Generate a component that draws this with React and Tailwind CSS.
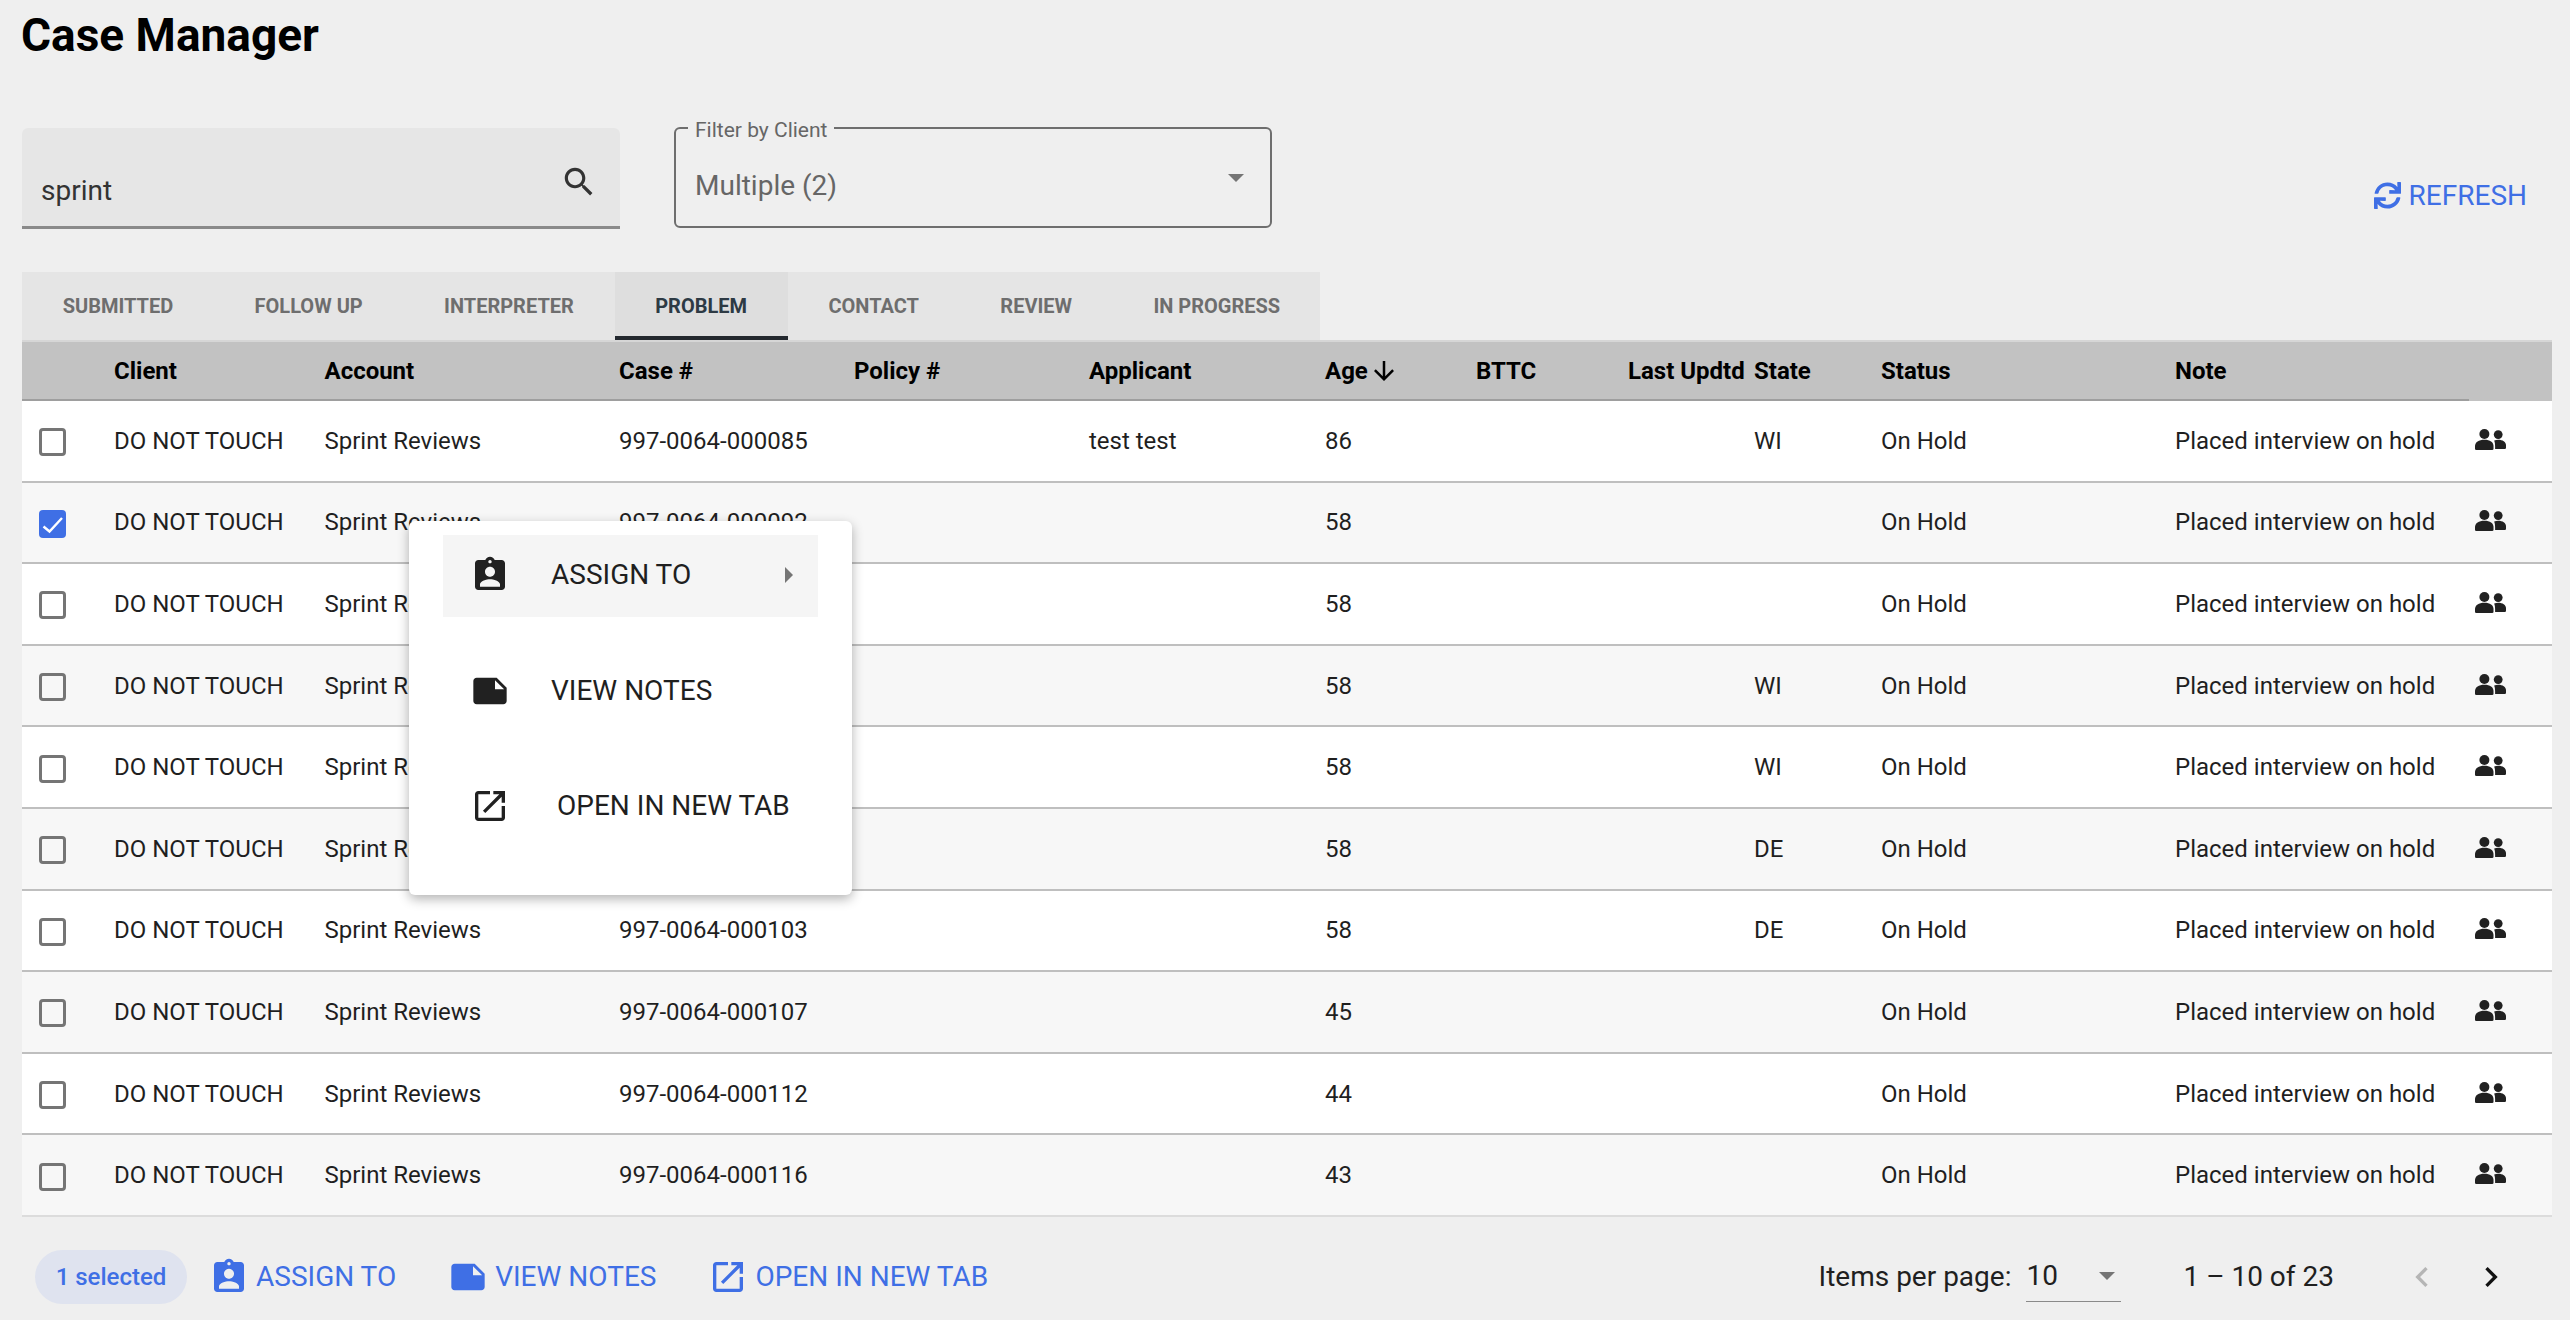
import React from "react";
import { FaSync } from "react-icons/fa";

const P = {
  assign: "M19 3h-4.18C14.4 1.84 13.3 1 12 1c-1.3 0-2.4.84-2.82 2H5c-1.1 0-2 .9-2 2v14c0 1.1.9 2 2 2h14c1.1 0 2-.9 2-2V5c0-1.1-.9-2-2-2zm-7 0c.55 0 1 .45 1 1s-.45 1-1 1-1-.45-1-1 .45-1 1-1zm0 4c1.66 0 3 1.34 3 3s-1.34 3-3 3-3-1.34-3-3 1.34-3 3-3zm6 12H6v-1.4c0-2 4-3.1 6-3.1s6 1.1 6 3.1V19z",
  note: "M22 10l-6-6H4c-1.1 0-2 .9-2 2v12.01c0 1.1.9 1.99 2 1.99l16-.01c1.1 0 2-.89 2-1.99v-8zm-7-4.5l5.5 5.5H15V5.5z",
  open: "M19 19H5V5h7V3H5c-1.11 0-2 .9-2 2v14c0 1.1.89 2 2 2h14c1.1 0 2-.9 2-2v-7h-2v7zM14 3v2h3.59l-9.83 9.83 1.41 1.41L19 6.41V10h2V3h-7z",
  search: "M15.5 14h-.79l-.28-.27C15.41 12.59 16 11.11 16 9.5 16 5.91 13.09 3 9.5 3S3 5.91 3 9.5 5.91 16 9.5 16c1.61 0 3.09-.59 4.23-1.57l.27.28v.79l5 4.99L20.49 19l-4.99-5zm-6 0C7.01 14 5 11.99 5 9.5S7.01 5 9.5 5 14 7.01 14 9.5 11.99 14 9.5 14z",
  right: "M10 6L8.59 7.41 13.17 12l-4.58 4.59L10 18l6-6z",
  left: "M15.41 7.41L14 6l-6 6 6 6 1.41-1.41L10.83 12z",
  down: "M20 12l-1.41-1.41L13 16.17V4h-2v12.17l-5.58-5.59L4 12l8 8 8-8z",
};

const Icon = ({ d, className }) => (
  <svg viewBox="0 0 24 24" fill="currentColor" className={className}><path d={d} /></svg>
);

const People = () => (
  <svg viewBox="0 0 31 21" fill="currentColor" className="mb-[3px] h-[21px] w-[31px] text-[#212121]">
    <circle cx="9.4" cy="5" r="5" />
    <path d="M0 17c0-4 3.8-6.3 9.4-6.3s9.1 2.3 9.1 6.3v2.7q0 1.3-1.3 1.3H1.3Q0 21 0 19.7z" />
    <circle cx="23.2" cy="5.6" r="4.4" />
    <path d="M19.2 11.6c1.2-.5 2.6-.8 4-.8 4.4 0 7.8 2.2 7.8 5.3v2.7q0 1.2-1.2 1.2H20.1V17c0-2-.3-3.9-.9-5.4z" />
  </svg>
);

const TABS = ["SUBMITTED", "FOLLOW UP", "INTERPRETER", "PROBLEM", "CONTACT", "REVIEW", "IN PROGRESS"];
const HEAD = ["", "Client", "Account", "Case #", "Policy #", "Applicant", "Age", "BTTC", "Last Updtd", "State", "Status", "Note"];
const ROWS = [
  ["000085", "86", "WI", "test test"],
  ["000092", "58", ""],
  ["000094", "58", ""],
  ["000096", "58", "WI"],
  ["000098", "58", "WI"],
  ["000100", "58", "DE"],
  ["000103", "58", "DE"],
  ["000107", "45", ""],
  ["000112", "44", ""],
  ["000116", "43", ""],
];
const COLS = "grid grid-cols-[92px_210.5px_294.5px_235px_235px_236px_151px_152px_126px_127px_294px_294px_83px]";

const Checkbox = ({ on }) =>
  on ? (
    <span className="flex h-[28px] w-[27px] items-center justify-center rounded-[4px] bg-[#3f6fe5] text-white">
      <svg viewBox="0 0 27 28" fill="none" stroke="currentColor" strokeWidth="2.4" className="h-[28px] w-[27px]">
        <path d="M4.5 16.5l6 5L23 8" />
      </svg>
    </span>
  ) : (
    <span className="block h-[28px] w-[27px] rounded-[4px] border-[3px] border-[#757575]" />
  );

export default function App() {
  return (
    <div className="h-[1320px] w-[2570px] overflow-hidden bg-[#efefef] font-['Roboto',sans-serif] text-[24px] text-[#1f1f1f]">
      <h1 className="h-[128px] pl-[21px] pt-[8px] text-[46px] font-bold leading-[54px] text-black">Case Manager</h1>

      <div className="flex h-[144px] pl-[22px] pr-[43px]">
        <div className="flex h-[101px] w-[598px] items-end justify-between rounded-t-[6px] border-b-[3px] border-[#8a8a8a] bg-[#e6e6e6] pb-[19px] pl-[19px] pr-[22px]">
          <span className="text-[28px] leading-[32px] text-[#333]">sprint</span>
          <Icon d={P.search} className="mb-[6px] h-[38px] w-[38px] text-[#333]" />
        </div>
        <fieldset className="-mt-[9px] ml-[54px] h-[109px] w-[598px] rounded-[6px] border-[2px] border-[#6e6e6e] pl-[12px] pr-[26px]">
          <legend className="px-[7px] pt-[4px] text-[21px] leading-[14px] text-[#666]">Filter by Client</legend>
          <div className="flex h-[91px] items-center justify-between pl-[7px] pt-[7px]">
            <span className="text-[28px] text-[#666]">Multiple (2)</span>
            <span className="mb-[16px] h-0 w-0 border-x-[8px] border-t-[8px] border-x-transparent border-t-[#757575]" />
          </div>
        </fieldset>
        <div className="ml-auto flex h-[135px] items-center gap-[8px] text-[#3f6fe5]">
          <FaSync className="h-[27px] w-[27px]" />
          <span className="text-[28px]">REFRESH</span>
        </div>
      </div>

      <div className="ml-[22px] flex h-[68px] w-[1298px] bg-[#e5e5e5]">
        {TABS.map((t) => (
          <div
            key={t}
            className={
              t === "PROBLEM"
                ? "flex h-full items-center whitespace-nowrap border-b-[4px] border-[#23282e] bg-[#dedede] px-[40.7px] pt-[4px] text-[20px] font-bold text-[#2d3a44]"
                : "flex h-full items-center whitespace-nowrap px-[40.7px] text-[20px] font-bold text-[#6e6e6e]"
            }
          >
            {t}
          </div>
        ))}
      </div>

      <div className="ml-[22px] w-[2530px] border-t-[2px] border-[#d6d6d6]">
        <div className={`${COLS} h-[59px] bg-[#c2c2c2] font-bold text-black`}>
          {HEAD.map((h, i) => (
            <div key={i} className="flex items-center gap-[1px] border-b-[2px] border-[#9e9e9e] pt-[1px]">
              {h}
              {h === "Age" && <Icon d={P.down} className="h-[30px] w-[30px]" />}
            </div>
          ))}
          <div />
        </div>
        {ROWS.map((r, i) => (
          <div
            key={r[0]}
            className={`${COLS} h-[81.6px] items-center border-b-[2px] ${i === 9 ? "border-[#dcdcdc]" : "border-[#bfbfbf]"} ${i % 2 ? "bg-[#f7f7f7]" : "bg-white"}`}
          >
            <div className="pl-[17px] pt-[3px]"><Checkbox on={i === 1} /></div>
            <div>DO NOT TOUCH</div>
            <div>Sprint Reviews</div>
            <div>997-0064-{r[0]}</div>
            <div />
            <div>{r[3]}</div>
            <div>{r[1]}</div>
            <div />
            <div />
            <div>{r[2]}</div>
            <div>On Hold</div>
            <div>Placed interview on hold</div>
            <div className="flex pl-[6px]"><People /></div>
          </div>
        ))}
      </div>

      <div className="flex h-[102px] items-center pl-[35px] pr-[59px] pt-[18px] text-[#3f6fe5]">
        <span className="flex h-[54px] w-[152px] items-center justify-center rounded-full bg-[#dfe3ef] text-[24px] font-medium">1 selected</span>
        <span className="ml-[22px] flex items-center gap-[7px] text-[28px]"><Icon d={P.assign} className="h-[40px] w-[40px]" />ASSIGN TO</span>
        <span className="ml-[52px] flex items-center gap-[7px] text-[28px]"><Icon d={P.note} className="h-[40px] w-[40px]" />VIEW NOTES</span>
        <span className="ml-[52px] flex items-center gap-[7px] text-[28px]"><Icon d={P.open} className="h-[40px] w-[40px]" />OPEN IN NEW TAB</span>
        <div className="ml-auto flex items-center text-[28px] text-[#1f1f1f]">
          <span>Items per page:</span>
          <span className="ml-[15px] flex h-[50px] w-[95px] items-center justify-between border-b-[1px] border-[#8a8a8a] pr-[6px]">
            10
            <span className="h-0 w-0 border-x-[8px] border-t-[8px] border-x-transparent border-t-[#757575]" />
          </span>
          <span className="ml-[62px]">1 – 10 of 23</span>
          <Icon d={P.left} className="ml-[68px] h-[40px] w-[40px] text-[#b5b5b5]" />
          <Icon d={P.right} className="ml-[29px] h-[40px] w-[40px] text-[#111]" />
        </div>
      </div>

      <div className="absolute left-[409px] top-[521px] h-[374px] w-[443px] rounded-[6px] bg-white px-[34px] pt-[14px] shadow-[0_4px_12px_rgba(0,0,0,0.3)]">
        <div className="flex h-[82px] items-center bg-[#f5f5f5] pb-[2px] pl-[27px] pr-[25px] text-[28px]">
          <Icon d={P.assign} className="h-[40px] w-[40px] text-[#212121]" />
          <span className="ml-[41px]">ASSIGN TO</span>
          <span className="ml-auto h-0 w-0 border-y-[8px] border-l-[8px] border-y-transparent border-l-[#757575]" />
        </div>
        <div className="mt-[33.5px] flex h-[82px] items-center pb-[2px] pl-[27px] text-[28px]">
          <Icon d={P.note} className="h-[40px] w-[40px] text-[#212121]" />
          <span className="ml-[41px]">VIEW NOTES</span>
        </div>
        <div className="mt-[33.5px] flex h-[82px] items-center pb-[2px] pl-[27px] text-[28px]">
          <Icon d={P.open} className="h-[40px] w-[40px] text-[#212121]" />
          <span className="ml-[47px]">OPEN IN NEW TAB</span>
        </div>
      </div>
    </div>
  );
}
